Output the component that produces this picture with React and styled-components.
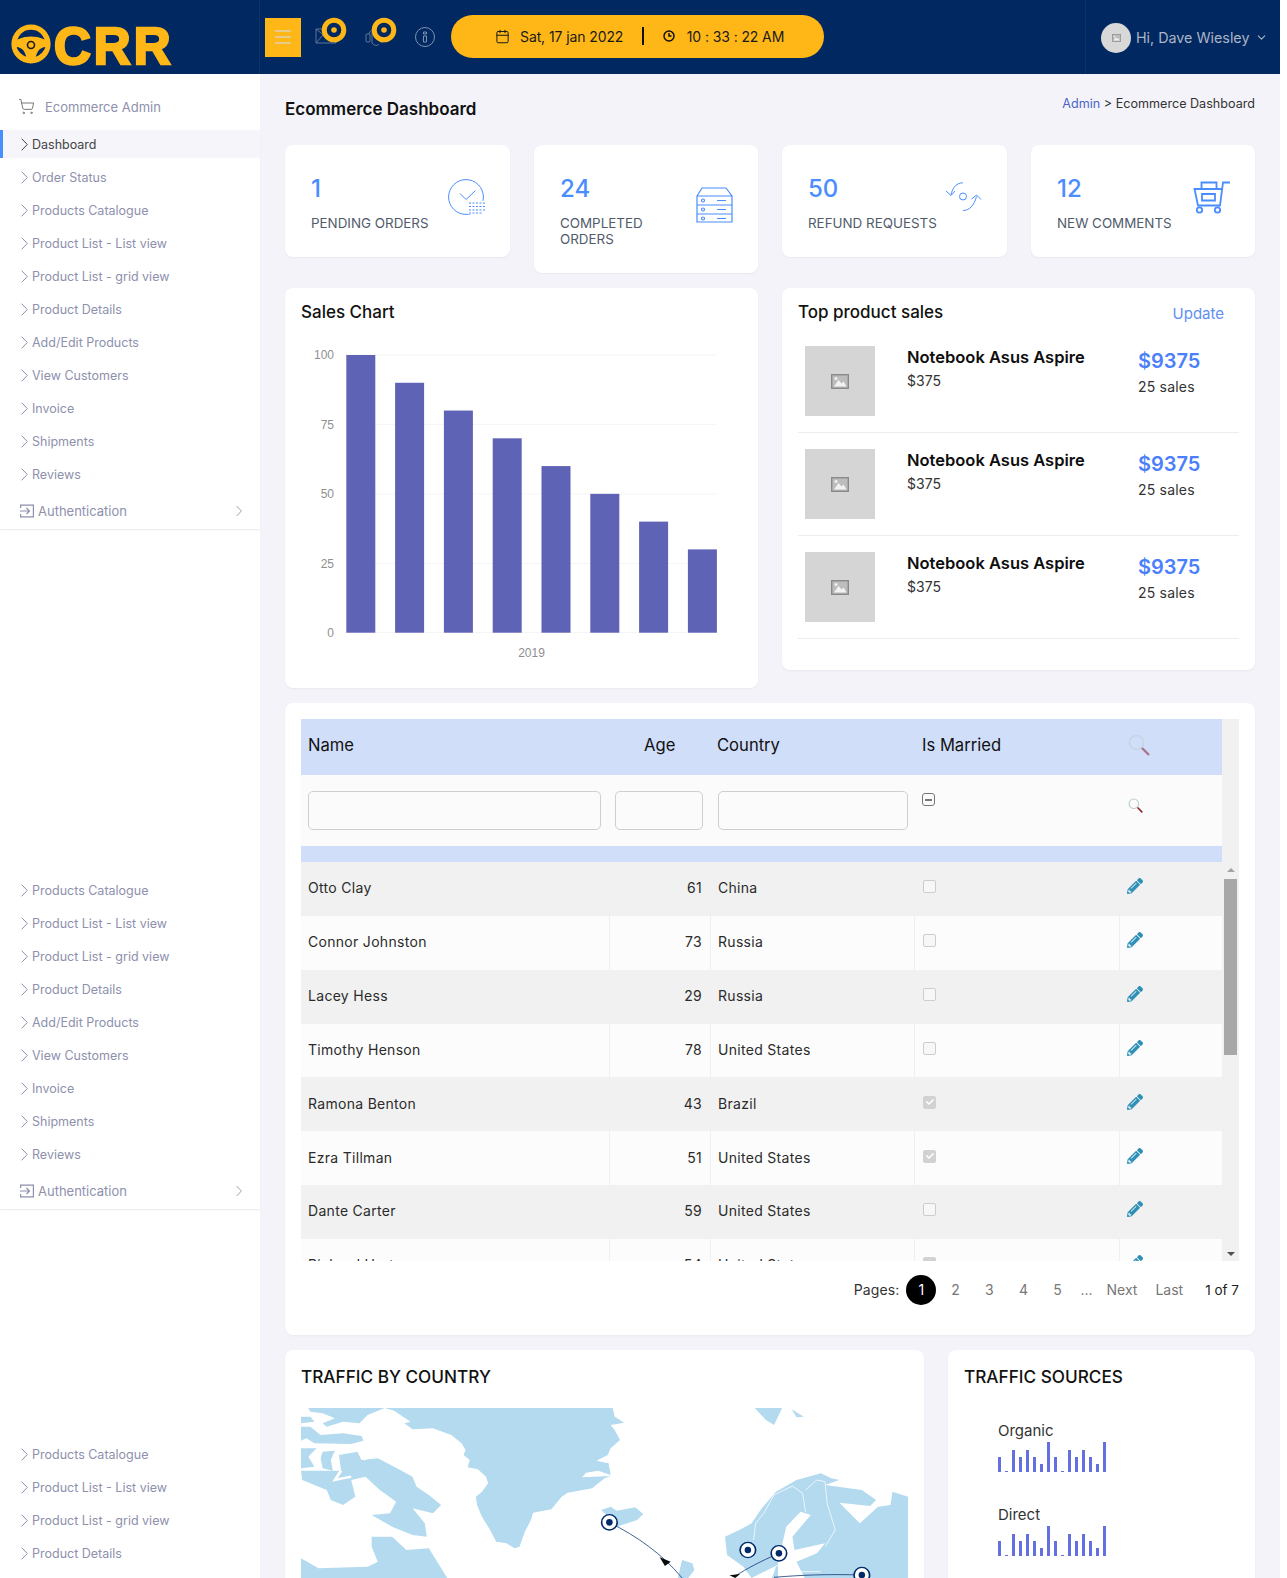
import React from 'react'
import styled, { createGlobalStyle } from 'styled-components'
import { ShoppingCart, Calendar, ChevronDown } from 'lucide-react'
import { FaPencilAlt, FaCheck } from 'react-icons/fa'

const FONT = 'Inter, "Open Sans", sans-serif'
const NAVY = '#012860'
const AMBER = '#ffb718'
const BLUE = '#4a8dff'

const GlobalStyle = createGlobalStyle`
  html, body {
    margin: 0;
    height: 1578px;
    overflow: hidden;
    background: #fff;
    font-family: ${FONT};
  }
  * { box-sizing: border-box; }
`

const Page = styled.div`
  width: 1280px;
  height: 1578px;
  overflow: hidden;
  background: #f3f3f9;
`

/* top bar */
const TopBar = styled.header`
  height: 74px;
  background: ${NAVY};
  display: flex;
  align-items: center;
`
const LogoBox = styled.div`
  width: 260px;
  height: 74px;
  flex: none;
  padding: 14px 0 0 11px;
  display: flex;
  align-items: center;
  gap: 3px;
  border-right: 1px solid #0c3468;
`
const LogoText = styled.span`
  margin-top: 6px;
  font-family: "Liberation Sans", sans-serif;
  font-weight: 700;
  font-size: 51px;
  line-height: 40px;
  letter-spacing: 3px;
  color: ${AMBER};
  -webkit-text-stroke: 2.5px ${AMBER};
`
const MenuButton = styled.button`
  width: 36px;
  height: 39px;
  margin-left: 5px;
  padding: 0;
  border: 0;
  background: ${AMBER};
  display: flex;
  flex-direction: column;
  align-items: center;
  justify-content: center;
  gap: 4.5px;
  span {
    width: 16px;
    height: 1.5px;
    background: #e6cb8a;
  }
`
const IconSlot = styled.div`
  position: relative;
  width: 20px;
  height: 20px;
  margin-left: ${(p) => p.$left}px;
  color: #5c7697;
`
const Badge = styled.svg`
  position: absolute;
  top: -10px;
  left: 6px;
`
const DatePill = styled.div`
  width: 373px;
  height: 43px;
  margin: 0 0 2px 16px;
  padding-left: 44px;
  border-radius: 22px;
  background: ${AMBER};
  display: flex;
  align-items: center;
  color: #1a1a1a;
  font-size: 14px;
  letter-spacing: -0.1px;
`
const PillText = styled.span`
  margin-left: ${(p) => p.$left}px;
`
const PillDivider = styled.span`
  width: 1.5px;
  height: 18px;
  margin: 0 19px;
  background: #111;
`
const UserBox = styled.div`
  margin-left: auto;
  width: 195px;
  height: 74px;
  padding-left: 15px;
  border-left: 1px solid #0c3468;
  display: flex;
  align-items: center;
  color: #aab5c6;
  font-size: 14.3px;
`
const Avatar = styled.div`
  width: 30px;
  height: 30px;
  margin: 2px 5px 0 0;
  border-radius: 50%;
  background: #d8d8d8;
  display: flex;
  align-items: center;
  justify-content: center;
`

/* side nav */
const Layout = styled.div`
  display: flex;
`
const Sidebar = styled.aside`
  width: 260px;
  height: 1504px;
  flex: none;
  background: #fff;
`
const NavTitle = styled.div`
  height: 56px;
  padding: 9px 0 0 18px;
  display: flex;
  align-items: center;
  gap: 10px;
  color: #8e90ad;
  font-size: 13px;
`
const NavGroup = styled.nav`
  margin-top: ${(p) => p.$top || 0}px;
  border-bottom: ${(p) => (p.$open ? '0' : '1px solid #ededf2')};
  box-shadow: ${(p) => (p.$open ? 'none' : '0 1px 2px rgba(0, 0, 0, 0.03)')};
`
const NavItem = styled.a`
  height: 28px;
  margin-bottom: 5px;
  padding-left: 21px;
  display: flex;
  align-items: center;
  gap: 4px;
  font-size: 12.5px;
  color: ${(p) => (p.$active ? '#444' : '#8e90ad')};
  background: ${(p) => (p.$active ? '#f5f5fa' : 'transparent')};
  box-shadow: ${(p) => (p.$active ? `inset 3px 0 0 ${BLUE}` : 'none')};
`
const NavAuth = styled.a`
  height: 36px;
  padding: 0 18px 0 20px;
  display: flex;
  align-items: center;
  gap: 4px;
  font-size: 13px;
  color: #8e90ad;
  svg:last-child {
    margin-left: auto;
  }
`

/* main column */
const Main = styled.main`
  flex: 1;
  padding: 0 25px;
`
const TitleRow = styled.div`
  height: 71px;
  display: flex;
  justify-content: space-between;
  padding-top: 22px;
`
const PageTitle = styled.h1`
  margin: 0;
  font-size: 17px;
  line-height: 26px;
  font-weight: 600;
  color: #111;
`
const Crumbs = styled.div`
  font-size: 12.6px;
  line-height: 16px;
  color: #333;
  a {
    color: #4a66c8;
  }
`
const Row = styled.div`
  display: flex;
  align-items: flex-start;
  gap: 24px;
  margin-bottom: 15px;
`
const Card = styled.section`
  width: ${(p) => p.$w}px;
  height: ${(p) => (p.$h ? `${p.$h}px` : 'auto')};
  flex: none;
  background: #fff;
  border-radius: 8px;
  box-shadow: 0 1px 2px rgba(30, 30, 80, 0.05);
`
const StatCard = styled(Card)`
  padding: 28px 24px 26px 26px;
  display: flex;
  justify-content: space-between;
`
const StatNumber = styled.div`
  font-size: 24px;
  line-height: 32px;
  font-weight: 500;
  color: ${BLUE};
`
const StatLabel = styled.div`
  margin-top: 10px;
  font-size: 13.4px;
  line-height: 16px;
  color: #515b6c;
  text-transform: uppercase;
`
const StatIcon = styled.svg`
  flex: none;
  margin-top: ${(p) => p.$top}px;
  color: ${BLUE};
`
const CardTitle = styled.h2`
  margin: 0;
  font-size: 17px;
  line-height: 24px;
  font-weight: 500;
  color: #111;
`
const ChartCard = styled(Card)`
  padding: 12px 16px;
`
const ChartSvg = styled.svg`
  display: block;
`
const ProductsCard = styled(Card)`
  padding: 12px 16px;
`
const ProductsHead = styled.div`
  height: 30px;
  display: flex;
  justify-content: space-between;
`
const UpdateLink = styled.a`
  margin: 2px 15px 0 0;
  font-size: 15px;
  line-height: 24px;
  color: #5f8ff5;
`
const ProductRow = styled.div`
  height: 103px;
  padding: 16px 0 0 7px;
  display: flex;
  border-bottom: 1px solid #ececf1;
`
const Thumb = styled.div`
  width: 70px;
  height: 70px;
  flex: none;
  background: #d5d5d5;
  display: flex;
  align-items: center;
  justify-content: center;
`
const ProductInfo = styled.div`
  width: 231px;
  margin-left: 32px;
`
const ProductName = styled.div`
  font-size: 16.5px;
  line-height: 22px;
  font-weight: 600;
  color: #0e0e0e;
`
const ProductPrice = styled.div`
  margin-top: 3px;
  font-size: 14px;
  line-height: 20px;
  color: #333;
`
const ProductTotal = styled.div`
  margin-top: 4px;
  font-size: 20px;
  line-height: 22px;
  font-weight: 600;
  color: #4c7ffb;
`
const ProductSales = styled.div`
  margin-top: 5px;
  font-size: 14px;
  line-height: 20px;
  letter-spacing: 0.2px;
  color: #333;
`

/* grid */
const TableCard = styled(Card)`
  height: 632px;
  padding: 16px 16px 0;
`
const TableWrap = styled.div`
  display: flex;
  height: 542px;
`
const TableArea = styled.div`
  width: 921px;
  flex: none;
`
const GridRow = styled.div`
  height: ${(p) => p.$h}px;
  display: grid;
  grid-template-columns: 308px 101px 204px 205px 103px;
  background: ${(p) => p.$bg};
  font-size: 14px;
  letter-spacing: 0.3px;
  color: #2b2b2b;
`
const HeadCell = styled.div`
  padding: 0 0 4px ${(p) => p.$left}px;
  display: flex;
  align-items: center;
  color: #111;
  font-size: 16.6px;
  letter-spacing: 0;
`
const FilterCell = styled.div`
  padding: ${(p) => p.$top || 16}px ${(p) => p.$right || 8}px 0 ${(p) => p.$left}px;
`
const FilterInput = styled.input`
  display: block;
  width: 100%;
  height: 39px;
  background: #fbfbfb;
  border: 1px solid #cfcfcf;
  border-radius: 5px;
`
const Strip = styled.div`
  height: 16px;
  background: #d0def9;
`
const BodyWindow = styled.div`
  height: 399px;
  overflow: hidden;
`
const Cell = styled.div`
  display: flex;
  align-items: center;
  padding: 0 8px 2px ${(p) => (p.$line ? 7 : 8)}px;
  justify-content: ${(p) => (p.$right ? 'flex-end' : 'flex-start')};
  border-left: ${(p) => (p.$line ? '1px solid #efefef' : '0')};
`
const NameCell = styled(Cell)`
  padding-left: 7px;
`
const PencilCell = styled(Cell)`
  padding-bottom: 5px;
  color: #2e90b6;
`
const Check = styled.span`
  width: 13px;
  height: 13px;
  margin: 0 0 2px 1px;
  border-radius: 2px;
  border: 1px solid ${(p) => (p.$on ? '#d2d2d2' : '#cdcdcd')};
  background: ${(p) => (p.$on ? '#d2d2d2' : '#f7f7f7')};
  color: #fff;
  display: flex;
  align-items: center;
  justify-content: center;
`
const MarriedFilter = styled.div`
  padding: 18px 0 0 8px;
`
const Indeterminate = styled.span`
  width: 13px;
  height: 13px;
  border: 1px solid #777;
  border-radius: 3px;
  display: flex;
  align-items: center;
  justify-content: center;
  &::after {
    content: '';
    width: 7px;
    height: 2px;
    background: #777;
  }
`
const Track = styled.div`
  width: 17px;
  flex: none;
  padding: 149px 2px 0;
  background: #f1f1f1;
  display: flex;
  flex-direction: column;
  align-items: center;
`
const ArrowUp = styled.span`
  border: 4px solid transparent;
  border-top: 0;
  border-bottom: 4px solid #a3a3a3;
  margin-bottom: 7px;
`
const ScrollThumb = styled.div`
  width: 13px;
  height: 176px;
  flex: none;
  background: #a8a8a8;
`
const ArrowDown = styled.span`
  border: 4px solid transparent;
  border-bottom: 0;
  border-top: 4px solid #505050;
  margin-top: 197px;
`
const Pager = styled.div`
  height: 58px;
  padding-top: 14px;
  display: flex;
  justify-content: flex-end;
  align-items: flex-start;
  font-size: 14px;
  line-height: 30px;
  color: #777;
`
const PagesLabel = styled.span`
  margin-right: 5px;
  letter-spacing: 0.1px;
  color: #333;
`
const PageNum = styled.span`
  width: 34px;
  text-align: center;
  display: flex;
  justify-content: center;
  span {
    width: 30px;
    height: 30px;
    border-radius: 50%;
    background: ${(p) => (p.$on ? '#000' : 'transparent')};
    color: ${(p) => (p.$on ? '#fff' : 'inherit')};
  }
`
const PageLink = styled.span`
  margin-left: ${(p) => p.$left}px;
  font-size: ${(p) => (p.$dark ? 13.5 : 14)}px;
  color: ${(p) => (p.$dark ? '#222' : 'inherit')};
`

/* bottom */
const BottomCard = styled(Card)`
  height: 300px;
  padding: 13px 16px;
  overflow: hidden;
`
const BottomTitle = styled.h2`
  margin: 0 0 18px;
  font-size: 17.2px;
  line-height: 27px;
  font-weight: 500;
  color: #111;
  text-transform: uppercase;
`
const MapBox = styled.div`
  width: 607px;
  height: 170px;
`
const SourceList = styled.div`
  padding: 13px 0 0 34px;
`
const SourceLabel = styled.div`
  font-size: 15px;
  line-height: 20px;
  color: #333;
`
const Spark = styled.svg`
  display: block;
  margin: 1px 0 33px;
`

const Chevron = ({ w = 7, h = 13 }) => (
  <svg width={w} height={h} viewBox="0 0 7 13" fill="none" stroke="currentColor" strokeWidth="1">
    <path d="M.7.7 6.3 6.5.7 12.3" />
  </svg>
)

const Wheel = () => (
  <svg width="40" height="40" viewBox="0 0 40 40">
    <circle cx="20" cy="20" r="19.6" fill={AMBER} />
    <path d="M6.5 15.5C9 9 14 5.8 20 5.8S31 9 33.5 15.5C28 13 24 12.4 20 12.4S12 13 6.5 15.5Z" fill={NAVY} />
    <path d="M5.7 23c4 .6 7.6 2.4 9.5 9.8C10.800 31 7 27.500 5.700 23Z" fill={NAVY} />
    <path d="M34.300 23c-4 .6-7.600 2.400-9.500 9.800C29.200 31 33 27.500 34.300 23Z" fill={NAVY} />
    <circle cx="20" cy="21" r="3.500" fill={AMBER} stroke="#1a1a1a" strokeWidth="1.600" />
  </svg>
)

const Ring = () => (
  <Badge width="26" height="26" viewBox="0 0 26 26">
    <circle cx="13" cy="13" r="9.800" fill={NAVY} stroke={AMBER} strokeWidth="5" />
    <circle cx="13" cy="13" r="2.800" fill={AMBER} />
  </Badge>
)

const PictureIcon = ({ w = 18, h = 15, c = '#8a8a8a' }) => (
  <svg width={w} height={h} viewBox="0 0 18 15">
    <rect x=".7" y=".7" width="16.600" height="13.600" fill="#bdbdbd" stroke={c} strokeWidth="1.400" />
    <path d="M3 12.500 7.500 6l3 3.500 2-2 3 5Z" fill="#f2f2f2" />
    <circle cx="5" cy="4.500" r="1.500" fill="#f2f2f2" />
  </svg>
)

const SearchGlass = ({ size, faint }) => (
  <svg width={size} height={size} viewBox="0 0 22 22" fill="none" opacity={faint ? 0.55 : 1}>
    <circle cx="8.500" cy="8.500" r="7" stroke="#bcd0d0" strokeWidth="1.600" />
    <path d="M14 14l7 7" stroke="#8e2230" strokeWidth="2.400" />
  </svg>
)

const PendingIcon = () => (
  <StatIcon $top={6} width="38" height="38" viewBox="0 0 38 38" fill="none" stroke="currentColor">
    <circle cx="18" cy="18" r="17.400" />
    <path d="M12 14.500 18 20.500 27.500 11.500" />
    <rect x="20" y="22" width="18" height="13" fill="#fff" stroke="none" />
    <path d="M21 24h16M21 27.500h16M21 31h16M21 34h14" strokeDasharray="2 1.500" />
  </StatIcon>
)
const ServerIcon = () => (
  <StatIcon $top={14} width="38" height="36" viewBox="0 0 38 36" fill="none" stroke="currentColor" strokeWidth="1.200">
    <path d="M1 9 6 1h24l6 8v26H1ZM1 9h35M1 18h35M1 27h35" />
    <circle cx="7" cy="13.500" r="1.500" />
    <circle cx="7" cy="22.500" r="1.500" />
    <circle cx="7" cy="31.500" r="1.500" />
    <path d="M21 13.500h9M21 22.500h9M21 31.500h9" />
  </StatIcon>
)
const RefundIcon = () => (
  <StatIcon $top={9} width="38" height="30" viewBox="0 0 38 30" fill="none" stroke="currentColor" strokeWidth="1">
    <circle cx="18" cy="14.500" r="3.500" />
    <path d="M18 .8C12 .8 7.500 5 6 13M1 9l5 4.500L10 9" />
    <path d="M18 28.500c6 0 11-4.500 13.500-14M26.500 17l5-4 4.500 4.500" />
  </StatIcon>
)
const BasketIcon = () => (
  <StatIcon $top={8} width="38" height="33" viewBox="0 0 38 33" fill="none" stroke="currentColor" strokeWidth="1.800">
    <path d="M37 1.500h-7l-3 23H5L1.500 8h27" />
    <path d="M8.500 8V1.500h15V8M9 13h13v6.500H9Z" />
    <circle cx="6.500" cy="29" r="2.700" />
    <circle cx="24.500" cy="29" r="2.700" />
  </StatIcon>
)

const navLinks = ['Products Catalogue', 'Product List - List view', 'Product List - grid view', 'Product Details', 'Add/Edit Products', 'View Customers', 'Invoice', 'Shipments', 'Reviews']

const AuthIcon = () => (
  <svg width="14" height="14" viewBox="0 0 14 14" fill="none" stroke="currentColor" strokeWidth="1.200">
    <path d="M.6 4V1.200h12.800v11.600H.6V10M0 7h9M6.500 4 9.500 7l-3 3" />
  </svg>
)

const NavLinks = ({ count }) => navLinks.slice(0, count).map((t) => (
  <NavItem key={t}><Chevron />{t}</NavItem>
))

const AuthRow = () => (
  <NavAuth><AuthIcon />Authentication<Chevron w={6} h={12} /></NavAuth>
)

const products = [0, 1, 2]

const people = [
  ['Otto Clay', 61, 'China', false],
  ['Connor Johnston', 73, 'Russia', false],
  ['Lacey Hess', 29, 'Russia', false],
  ['Timothy Henson', 78, 'United States', false],
  ['Ramona Benton', 43, 'Brazil', true],
  ['Ezra Tillman', 51, 'United States', true],
  ['Dante Carter', 59, 'United States', false],
  ['Richard Hartman', 54, 'United States', true],
]

const barVals = [100, 90, 80, 70, 60, 50, 40, 30]
const SalesChart = () => (
  <ChartSvg width="441" height="345" viewBox="301 324 441 345">
    {[355, 424.5, 494, 563.5, 632.5].map((y) => (
      <line key={y} x1="346" x2="717" y1={y} y2={y} stroke="#f5f5f5" />
    ))}
    {barVals.map((v, i) => (
      <rect key={v} x={346.3 + i * 48.8} y={632.7 - 2.777 * v} width="29" height={2.777 * v} fill="#5f63b5" />
    ))}
    {[[100, 355], [75, 424.5], [50, 494], [25, 563.5], [0, 632.5]].map(([t, y]) => (
      <text key={t} x="334" y={y + 4} textAnchor="end" fontFamily="Liberation Sans" fontSize="12" fill="#8f8f8f">{t}</text>
    ))}
    <text x="531.500" y="657" textAnchor="middle" fontFamily="Liberation Sans" fontSize="12" fill="#8f8f8f">2019</text>
  </ChartSvg>
)

const sparkVals = [15, 1, 22, 15, 22, 15, 8, 30, 15, 1, 22, 15, 22, 15, 8, 30]
const Sparkline = () => (
  <Spark width="110" height="30" viewBox="0 0 110 30">
    {sparkVals.map((h, i) => (
      <rect key={i} x={i * 7} y={30 - h} width="3" height={h} fill="#6470e0" />
    ))}
  </Spark>
)

const Marker = ({ x, y }) => (
  <g>
    <ellipse cx={x} cy={y} rx="19" ry="23" fill="#fff" stroke="#012a6b" strokeWidth="4" />
    <ellipse cx={x} cy={y} rx="8" ry="10" fill="#012a6b" />
  </g>
)

const land = [
  '232,84 255,92 295,125 280,130 300,148 350,145 395,165 420,190 430,210 425,225 440,240 435,262 460,268 480,290 485,310 470,335 455,350 458,375 470,410 490,450 505,485 530,490 550,505 562,500 575,455 590,420 595,398 640,388 665,350 680,338 740,325 770,295 785,288 715,292 725,278 755,272 785,285 780,250 750,242 778,225 785,205 808,180 795,150 785,135 818,128 795,110 790,84',
  '45,84 232,84 190,105 170,130 130,125 90,140 80,130 110,115 80,100 50,95',
  '27,110 50,110 60,125 27,130',
  '27,140 50,140 75,165 130,160 175,168 180,182 150,192 60,190 40,175 27,182',
  '27,205 65,205 45,230 60,260 27,265',
  '80,215 110,212 100,240 105,272 80,265 75,235',
  '120,225 165,215 175,240 215,235 270,270 300,290 310,320 340,345 370,375 350,400 300,385 330,430 335,470 300,465 250,440 200,405 245,400 260,365 220,330 185,290 150,300 160,350 130,375 100,360 90,330 30,300 27,272 125,272',
  '200,470 250,470 285,510 340,505 385,594 27,594 27,535 70,565 190,560 215,545 200,500',
  '762,390 785,380 800,392 845,382 865,402 850,420 800,440 770,430 775,405',
  '960,540 985,550 990,570 975,594 950,594 955,565',
  '1138,84 1205,84 1185,135 1165,120',
  '1228,88 1258,110 1240,112',
  '1065,470 1100,450 1130,430 1155,385 1190,335 1240,300 1300,280 1325,295 1345,300 1310,315 1400,330 1435,360 1420,378 1345,368 1395,430 1440,380 1470,375 1475,335 1513,350 1513,594 1180,594 1190,560 1210,545 1130,594 1110,560 1070,525',
]

const TrafficMap = () => (
  <svg width="607" height="170" viewBox="27 84 1486 510" preserveAspectRatio="none">
    {land.map((p) => <polygon key={p} points={p} fill="#b3daef" />)}
    <polygon points="1195,545 1215,440 1250,395 1275,405 1230,470 1235,510 1310,490 1290,520 1240,545 1260,594 1195,594" fill="#fff" />
    <ellipse cx="218" cy="350" rx="10" ry="9" fill="#fff" />
    <path d="M170,215 185,240M125,272 110,300 150,290M90,395 130,400 170,440" fill="none" stroke="#fff" strokeWidth="7" />
    <path d="M1135,480 1140,430 1160,400 1185,345 1230,318 1255,340 1262,395M1262,330 1290,300 1310,305 1315,370 1335,450 1310,500M1230,575 1300,575" fill="none" stroke="#fff" strokeWidth="2" />
    <path d="M782,427C850,470 910,520 960,594M1197,520C1150,545 1120,565 1090,588M1400,585C1320,582 1250,585 1185,592" fill="none" stroke="#012a6b" strokeWidth="2" />
    <polygon points="905,532 932,545 918,558" fill="#0a0a0a" />
    <polygon points="1076,586 1102,582 1090,594" fill="#0a0a0a" />
    <Marker x={782} y={427} />
    <Marker x={1121} y={510} />
    <Marker x={1197} y={520} />
    <Marker x={1400} y={585} />
  </svg>
)

export default function App() {
  return (
    <Page>
      <GlobalStyle />
      <TopBar>
        <LogoBox>
          <Wheel />
          <LogoText>CRR</LogoText>
        </LogoBox>
        <MenuButton><span /><span /><span /></MenuButton>
        <IconSlot $left={14}>
          <svg width="22" height="18" viewBox="0 0 22 18" fill="none" stroke="currentColor">
            <path d="M1 2h20v14H1ZM1 2l10 8 10-8M1 16l7-8M21 16l-7-8" />
          </svg>
          <Ring />
        </IconSlot>
        <IconSlot $left={30}>
          <svg width="20" height="20" viewBox="0 0 20 20" fill="none" stroke="currentColor">
            <rect x="1" y="7" width="4" height="8" rx="1" />
            <rect x="15" y="7" width="4" height="8" rx="1" />
            <path d="M4 7C5 1 15 1 16 7M7 5v11c2 3 6 3 7 1" />
          </svg>
          <Ring />
        </IconSlot>
        <IconSlot $left={30}>
          <svg width="20" height="20" viewBox="0 0 20 20" fill="none" stroke="#7f93ad">
            <circle cx="10" cy="10" r="9.500" />
            <path d="M8.500 9h3v6h-3ZM8.500 5h3v2h-3Z" />
          </svg>
        </IconSlot>
        <DatePill>
          <Calendar size={15} strokeWidth={1.6} />
          <PillText $left={10}>Sat, 17 jan 2022</PillText>
          <PillDivider />
          <svg width="12" height="12" viewBox="0 0 12 12" fill="none" stroke="#111" strokeWidth="1.500">
            <circle cx="6" cy="6" r="5" />
            <path d="M6 3v3h2.500" />
          </svg>
          <PillText $left={12}>10 : 33 : 22 AM</PillText>
        </DatePill>
        <UserBox>
          <Avatar><PictureIcon w={9} h={8} /></Avatar>
          Hi, Dave Wiesley
          <ChevronDown size={13} style={{ marginLeft: 6 }} />
        </UserBox>
      </TopBar>

      <Layout>
        <Sidebar>
          <NavTitle><ShoppingCart size={17} strokeWidth={1.4} color="#777" />Ecommerce Admin</NavTitle>
          <NavGroup>
            <NavItem $active><Chevron />Dashboard</NavItem>
            <NavItem><Chevron />Order Status</NavItem>
            <NavLinks />
            <AuthRow />
          </NavGroup>
          <NavGroup $top={346}>
            <NavLinks />
            <AuthRow />
          </NavGroup>
          <NavGroup $top={230} $open>
            <NavLinks count={4} />
          </NavGroup>
        </Sidebar>

        <Main>
          <TitleRow>
            <PageTitle>Ecommerce Dashboard</PageTitle>
            <Crumbs><a>Admin</a> &gt; Ecommerce Dashboard</Crumbs>
          </TitleRow>

          <Row>
            <StatCard $w={225}>
              <div><StatNumber>1</StatNumber><StatLabel>Pending Orders</StatLabel></div>
              <PendingIcon />
            </StatCard>
            <StatCard $w={224}>
              <div><StatNumber>24</StatNumber><StatLabel>Completed Orders</StatLabel></div>
              <ServerIcon />
            </StatCard>
            <StatCard $w={225}>
              <div><StatNumber>50</StatNumber><StatLabel>Refund Requests</StatLabel></div>
              <RefundIcon />
            </StatCard>
            <StatCard $w={224}>
              <div><StatNumber>12</StatNumber><StatLabel>New Comments</StatLabel></div>
              <BasketIcon />
            </StatCard>
          </Row>

          <Row>
            <ChartCard $w={473} $h={400}>
              <CardTitle>Sales Chart</CardTitle>
              <SalesChart />
            </ChartCard>
            <ProductsCard $w={473} $h={382}>
              <ProductsHead>
                <CardTitle>Top product sales</CardTitle>
                <UpdateLink>Update</UpdateLink>
              </ProductsHead>
              {products.map((i) => (
                <ProductRow key={i}>
                  <Thumb><PictureIcon /></Thumb>
                  <ProductInfo>
                    <ProductName>Notebook Asus Aspire</ProductName>
                    <ProductPrice>$375</ProductPrice>
                  </ProductInfo>
                  <div>
                    <ProductTotal>$9375</ProductTotal>
                    <ProductSales>25 sales</ProductSales>
                  </div>
                </ProductRow>
              ))}
            </ProductsCard>
          </Row>

          <Row>
            <TableCard $w={970}>
              <TableWrap>
                <TableArea>
                  <GridRow $h={56} $bg="#d0def9">
                    <HeadCell $left={7}>Name</HeadCell>
                    <HeadCell $left={35}>Age</HeadCell>
                    <HeadCell $left={7}>Country</HeadCell>
                    <HeadCell $left={8}>Is Married</HeadCell>
                    <HeadCell $left={9}><SearchGlass size={22} faint /></HeadCell>
                  </GridRow>
                  <GridRow $h={71} $bg="#fbfbfb">
                    <FilterCell $left={7}><FilterInput /></FilterCell>
                    <FilterCell $left={6} $right={7}><FilterInput /></FilterCell>
                    <FilterCell $left={8} $right={6}><FilterInput /></FilterCell>
                    <MarriedFilter><Indeterminate /></MarriedFilter>
                    <FilterCell $left={9} $top={23}><SearchGlass size={15} /></FilterCell>
                  </GridRow>
                  <Strip />
                  <BodyWindow>
                    {people.map(([name, age, country, married], i) => (
                      <GridRow key={name} $h={53.850} $bg={i % 2 ? '#fcfcfc' : '#f1f1f1'}>
                        <NameCell>{name}</NameCell>
                        <Cell $right $line={i % 2}>{age}</Cell>
                        <Cell $line={i % 2}>{country}</Cell>
                        <Cell $line={i % 2}>
                          <Check $on={married}>{married && <FaCheck size={8} />}</Check>
                        </Cell>
                        <PencilCell $line={i % 2}><FaPencilAlt size={16} /></PencilCell>
                      </GridRow>
                    ))}
                  </BodyWindow>
                </TableArea>
                <Track>
                  <ArrowUp />
                  <ScrollThumb />
                  <ArrowDown />
                </Track>
              </TableWrap>
              <Pager>
                <PagesLabel>Pages:</PagesLabel>
                <PageNum $on><span>1</span></PageNum>
                <PageNum><span>2</span></PageNum>
                <PageNum><span>3</span></PageNum>
                <PageNum><span>4</span></PageNum>
                <PageNum><span>5</span></PageNum>
                <PageLink $left={6}>...</PageLink>
                <PageLink $left={14}>Next</PageLink>
                <PageLink $left={18}>Last</PageLink>
                <PageLink $left={22} $dark>1 of 7</PageLink>
              </Pager>
            </TableCard>
          </Row>

          <Row>
            <BottomCard $w={639}>
              <BottomTitle>Traffic by Country</BottomTitle>
              <MapBox><TrafficMap /></MapBox>
            </BottomCard>
            <BottomCard $w={307}>
              <BottomTitle>Traffic Sources</BottomTitle>
              <SourceList>
                <SourceLabel>Organic</SourceLabel>
                <Sparkline />
                <SourceLabel>Direct</SourceLabel>
                <Sparkline />
              </SourceList>
            </BottomCard>
          </Row>
        </Main>
      </Layout>
    </Page>
  )
}
